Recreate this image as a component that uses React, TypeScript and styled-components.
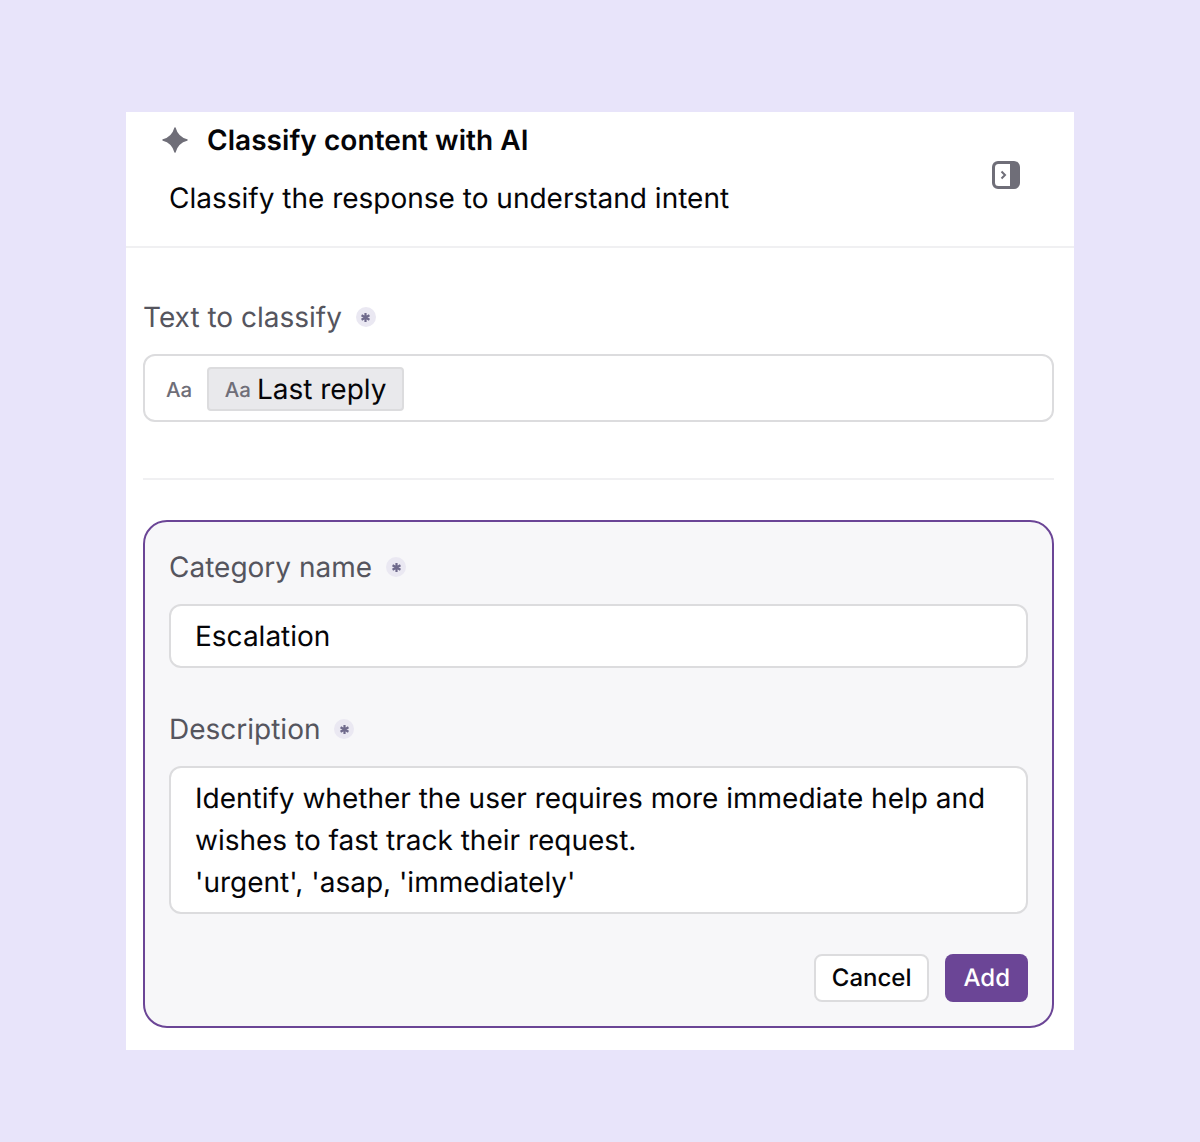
import React from 'react';
import styled, { createGlobalStyle } from 'styled-components';

const GlobalStyle = createGlobalStyle`
  html, body {
    margin: 0;
    padding: 0;
    background: #e8e4fa;
    font-family: Inter, "Liberation Sans", sans-serif;
    color: #050508;
    text-rendering: geometricPrecision;
  }
`;

const Required = () => (
  <RequiredDot>
    <svg width="11" height="11" viewBox="0 0 10 10">
      <path d="M5 .8v8.4M1.4 2.9l7.2 4.2M8.6 2.9l-7.2 4.2" stroke="#6f6a8c" strokeWidth="2" />
    </svg>
  </RequiredDot>
);

const App = () => {
  return (
    <Page>
      <GlobalStyle />
      <Panel>
        <Header>
          <HeaderText>
            <TitleRow>
              <svg width="26" height="26" viewBox="0 0 26 26">
                <path
                  d="M13 1Q15.5 10.5 25 13Q15.5 15.5 13 25Q10.500 15.500 1 13Q10.500 10.500 13 1z"
                  fill="#6f6e78"
                  stroke="#6f6e78"
                  strokeWidth="1.4"
                  strokeLinejoin="round"
                />
              </svg>
              <Title>Classify content with AI</Title>
            </TitleRow>
            <Subtitle>Classify the response to understand intent</Subtitle>
          </HeaderText>
          <svg width="28" height="28" viewBox="0 0 28 28">
            <rect width="28" height="28" rx="6" fill="#6f6e78" />
            <path d="M3 6.500a3.500 3.500 0 0 1 3.500-3.500H18v22H6.500A3.500 3.500 0 0 1 3 21.500z" fill="#fff" />
            <path d="M9.500 10.500l3.500 3.500-3.500 3.500" fill="none" stroke="#6f6e78" strokeWidth="2" />
          </svg>
        </Header>
        <Body>
          <Label>
            Text to classify <Required />
          </Label>
          <VariableField>
            <TypeHint>Aa</TypeHint>
            <Chip>
              <TypeHint>Aa</TypeHint>
              <ChipText>Last reply</ChipText>
            </Chip>
          </VariableField>
          <Divider />
          <CategoryCard>
            <Label>
              Category name <Required />
            </Label>
            <TextBox>Escalation</TextBox>
            <Label $spaced>
              Description <Required />
            </Label>
            <TextArea>
              Identify whether the user requires more immediate help and
              <br />
              wishes to fast track their request.
              <br />
              'urgent', 'asap, 'immediately'
            </TextArea>
            <Actions>
              <CancelButton>Cancel</CancelButton>
              <AddButton>Add</AddButton>
            </Actions>
          </CategoryCard>
        </Body>
      </Panel>
    </Page>
  );
};

const Page = styled.div`
  width: 1200px;
  height: 1142px;
  box-sizing: border-box;
  padding: 112px 126px 92px;
`;

const Panel = styled.div`
  background: #fff;
  height: 938px;
`;

const Header = styled.div`
  height: 136px;
  box-sizing: border-box;
  border-bottom: 2px solid #f0f0f2;
  display: flex;
  justify-content: space-between;
  align-items: center;
  padding: 0 54px 8px 36px;
`;

const HeaderText = styled.div`
  display: flex;
  flex-direction: column;
  gap: 22px;
  margin-bottom: 6px;
`;

const TitleRow = styled.div`
  display: flex;
  align-items: center;
  gap: 19px;
  margin-top: -7px;
  height: 36px;
`;

const Title = styled.div`
  font-size: 28px;
  font-weight: 600;
  line-height: 36px;
  letter-spacing: 0.05px;
`;

const Subtitle = styled.div`
  font-size: 28px;
  line-height: 36px;
  margin-left: 7px;
`;

const Body = styled.div`
  padding: 51px 20px 0 17px;
`;

const Label = styled.div<{ $spaced?: boolean }>`
  font-size: 28px;
  line-height: 36px;
  color: #55555e;
  display: flex;
  align-items: center;
  gap: 14px;
  margin-top: ${({ $spaced }) => ($spaced ? '43px' : '0')};
`;

const RequiredDot = styled.span`
  width: 20px;
  height: 20px;
  border-radius: 50%;
  background: #eae8f2;
  display: flex;
  align-items: center;
  justify-content: center;
`;

const VariableField = styled.div`
  margin-top: 19px;
  height: 68px;
  box-sizing: border-box;
  border: 2px solid #dcdcde;
  border-radius: 12px;
  background: #fff;
  display: flex;
  align-items: center;
  gap: 14.500px;
  padding: 2px 10px 0 21px;
`;

const TypeHint = styled.span`
  font-size: 20.500px;
  font-weight: 500;
  color: #6f6e78;
`;

const Chip = styled.div`
  height: 44px;
  box-sizing: border-box;
  background: #e9e9ec;
  border: 2px solid #dcdcde;
  border-radius: 4px;
  display: flex;
  align-items: center;
  gap: 6px;
  padding: 0 16px;
`;

const ChipText = styled.span`
  font-size: 28px;
`;

const Divider = styled.div`
  height: 2px;
  background: #f0f0f2;
  margin: 56px 0 40px;
`;

const CategoryCard = styled.div`
  height: 508px;
  box-sizing: border-box;
  border: 2px solid #6b4596;
  border-radius: 24px;
  background: #f7f7f9;
  padding: 27px 24px 24px;
`;

const TextBox = styled.div`
  margin-top: 19px;
  height: 64px;
  box-sizing: border-box;
  background: #fff;
  border: 2px solid #dcdcde;
  border-radius: 12px;
  padding: 0 24px;
  display: flex;
  align-items: center;
  font-size: 28px;
`;

const TextArea = styled.div`
  margin-top: 19px;
  height: 148px;
  box-sizing: border-box;
  background: #fff;
  border: 2px solid #dcdcde;
  border-radius: 12px;
  padding: 9px 24px;
  font-size: 28px;
  line-height: 42px;
`;

const Actions = styled.div`
  margin-top: 40px;
  display: flex;
  justify-content: flex-end;
  gap: 16px;
`;

const CancelButton = styled.div`
  height: 48px;
  box-sizing: border-box;
  padding: 0 15px 2px 16px;
  background: #fff;
  border: 2px solid #dcdcde;
  border-radius: 8px;
  display: flex;
  align-items: center;
  font-size: 24px;
  font-weight: 500;
`;

const AddButton = styled.div`
  height: 48px;
  box-sizing: border-box;
  padding: 0 18px 2px 19px;
  background: #6b4596;
  border-radius: 8px;
  display: flex;
  align-items: center;
  font-size: 24px;
  font-weight: 500;
  color: #fff;
`;

export default App;
